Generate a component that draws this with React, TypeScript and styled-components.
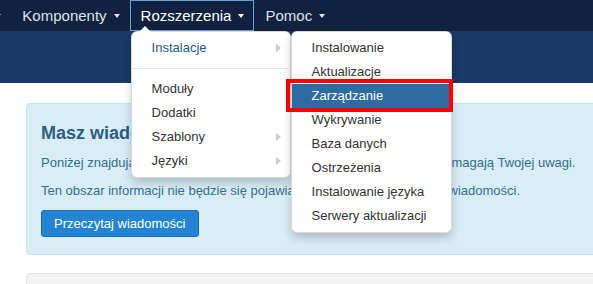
import React from "react";
import styled, { createGlobalStyle } from "styled-components";

const GlobalStyle = createGlobalStyle`
  html, body {
    margin: 0;
    padding: 0;
    background: #fff;
    overflow: hidden;
  }
  body {
    font-family: "Liberation Sans", Arial, sans-serif;
  }
`;

const Page = styled.div`
  width: 1000px;
`;

const NavBar = styled.nav`
  height: 31px;
  background: #10223f;
`;

const NavList = styled.ul`
  display: flex;
  list-style: none;
  margin: 0 0 0 -105px;
  padding: 0;
  height: 100%;
`;

const NavItem = styled.li<{ $active?: boolean }>`
  position: relative;
  box-sizing: border-box;
  height: 31px;
  display: flex;
  align-items: center;
  gap: 7px;
  padding: 0 9px 0 9px;
  border: 1px solid ${({ $active }) => ($active ? "#6d9fd2" : "transparent")};
  color: ${({ $active }) => ($active ? "#fff" : "#dde2ea")};
  font-size: 15px;
  white-space: nowrap;

  & + & {
    padding-left: 10px;
  }
`;

const Caret = styled.span`
  width: 0;
  height: 0;
  border-left: 3.5px solid transparent;
  border-right: 3.5px solid transparent;
  border-top: 4px solid currentColor;
  margin-top: 1px;
`;

const SubHeader = styled.div`
  height: 52px;
  background: #1b3867;
`;

const Menu = styled.ul<{ $width: number }>`
  position: absolute;
  z-index: 10;
  box-sizing: border-box;
  width: ${({ $width }) => $width}px;
  margin: 0;
  padding: 4px 0;
  list-style: none;
  background: #fff;
  border: 1px solid rgba(0, 0, 0, 0.15);
  border-radius: 6px;
  box-shadow: 0 5px 10px rgba(0, 0, 0, 0.2);
`;

const MainMenu = styled(Menu)`
  top: 30px;
  left: 0;

  &::before {
    content: "";
    position: absolute;
    top: -6px;
    left: 7px;
    border-left: 6px solid transparent;
    border-right: 6px solid transparent;
    border-bottom: 6px solid #fff;
  }
`;

const SubMenu = styled(Menu)`
  top: -5px;
  left: calc(100% + 1px);
`;

const MenuItem = styled.li<{ $open?: boolean; $selected?: boolean }>`
  position: relative;
  height: 24px;
  line-height: 24px;
  padding: 0 20px;
  font-size: 13px;
  white-space: nowrap;
  color: ${({ $open, $selected }) =>
    $selected ? "#fff" : $open ? "#245c8c" : "#333"};
  background: ${({ $selected }) => ($selected ? "#2d6ca2" : "transparent")};

  ${({ $selected }) =>
    $selected &&
    `
    &::after {
      content: "";
      position: absolute;
      top: -5px;
      bottom: -4px;
      left: -6px;
      right: -2px;
      border: 4px solid #ff0000;
    }
  `}
`;

const Chevron = styled.span`
  position: absolute;
  right: 9px;
  top: 8px;
  width: 0;
  height: 0;
  border-top: 4px solid transparent;
  border-bottom: 4px solid transparent;
  border-left: 5px solid #ccc;
`;

const Divider = styled.li`
  height: 1px;
  margin: 8px 1px;
  background: #e5e5e5;
`;

const Main = styled.main`
  padding: 20px 0 0 26px;
`;

const Alert = styled.section`
  box-sizing: border-box;
  padding: 18px 14px 17px;
  background: #d9edf7;
  border: 1px solid #bce8f1;
  border-radius: 4px;
  color: #31708f;
`;

const AlertTitle = styled.h2`
  margin: 0;
  font-size: 18px;
  line-height: 22px;
  font-weight: bold;
  color: #2a5d89;
`;

const AlertText = styled.p`
  margin: 10px 0 0;
  font-size: 13px;
  line-height: 18px;
  white-space: nowrap;
`;

const Button = styled.button`
  box-sizing: border-box;
  margin-top: 10px;
  height: 27px;
  padding: 0 12px;
  font-family: inherit;
  font-size: 13px;
  color: #fff;
  background: #2384d3;
  border: 1px solid #1b6cb1;
  border-radius: 3px;
`;

const Well = styled.div`
  margin-top: 18px;
  height: 30px;
  background: #f3f3f3;
  border: 1px solid #e3e3e3;
  border-radius: 4px;
`;

const installItems = [
  "Instalowanie",
  "Aktualizacje",
  "Zarządzanie",
  "Wykrywanie",
  "Baza danych",
  "Ostrzeżenia",
  "Instalowanie języka",
  "Serwery aktualizacji",
];

export default function App() {
  return (
    <Page>
      <GlobalStyle />
      <NavBar>
        <NavList>
          <NavItem>
            Użytkownicy <Caret />
          </NavItem>
          <NavItem>
            Komponenty <Caret />
          </NavItem>
          <NavItem $active>
            Rozszerzenia <Caret />
            <MainMenu $width={160}>
              <MenuItem $open>
                Instalacje
                <Chevron />
                <SubMenu $width={161}>
                  {installItems.map((item) => (
                    <MenuItem key={item} $selected={item === "Zarządzanie"}>
                      {item}
                    </MenuItem>
                  ))}
                </SubMenu>
              </MenuItem>
              <Divider />
              <MenuItem>Moduły</MenuItem>
              <MenuItem>Dodatki</MenuItem>
              <MenuItem>
                Szablony
                <Chevron />
              </MenuItem>
              <MenuItem>
                Języki
                <Chevron />
              </MenuItem>
            </MainMenu>
          </NavItem>
          <NavItem>
            Pomoc <Caret />
          </NavItem>
        </NavList>
      </NavBar>
      <SubHeader />
      <Main>
        <Alert>
          <AlertTitle>Masz wiadomości poinstalacyjne</AlertTitle>
          <AlertText>
            Poniżej znajdują się ważne wiadomości odnośnie tej instalacji, które
            wymagają Twojej uwagi.
          </AlertText>
          <AlertText>
            Ten obszar informacji nie będzie się pojawiał, jeżeli ukryjesz
            wszystkie wiadomości.
          </AlertText>
          <Button>Przeczytaj wiadomości</Button>
        </Alert>
        <Well />
      </Main>
    </Page>
  );
}
